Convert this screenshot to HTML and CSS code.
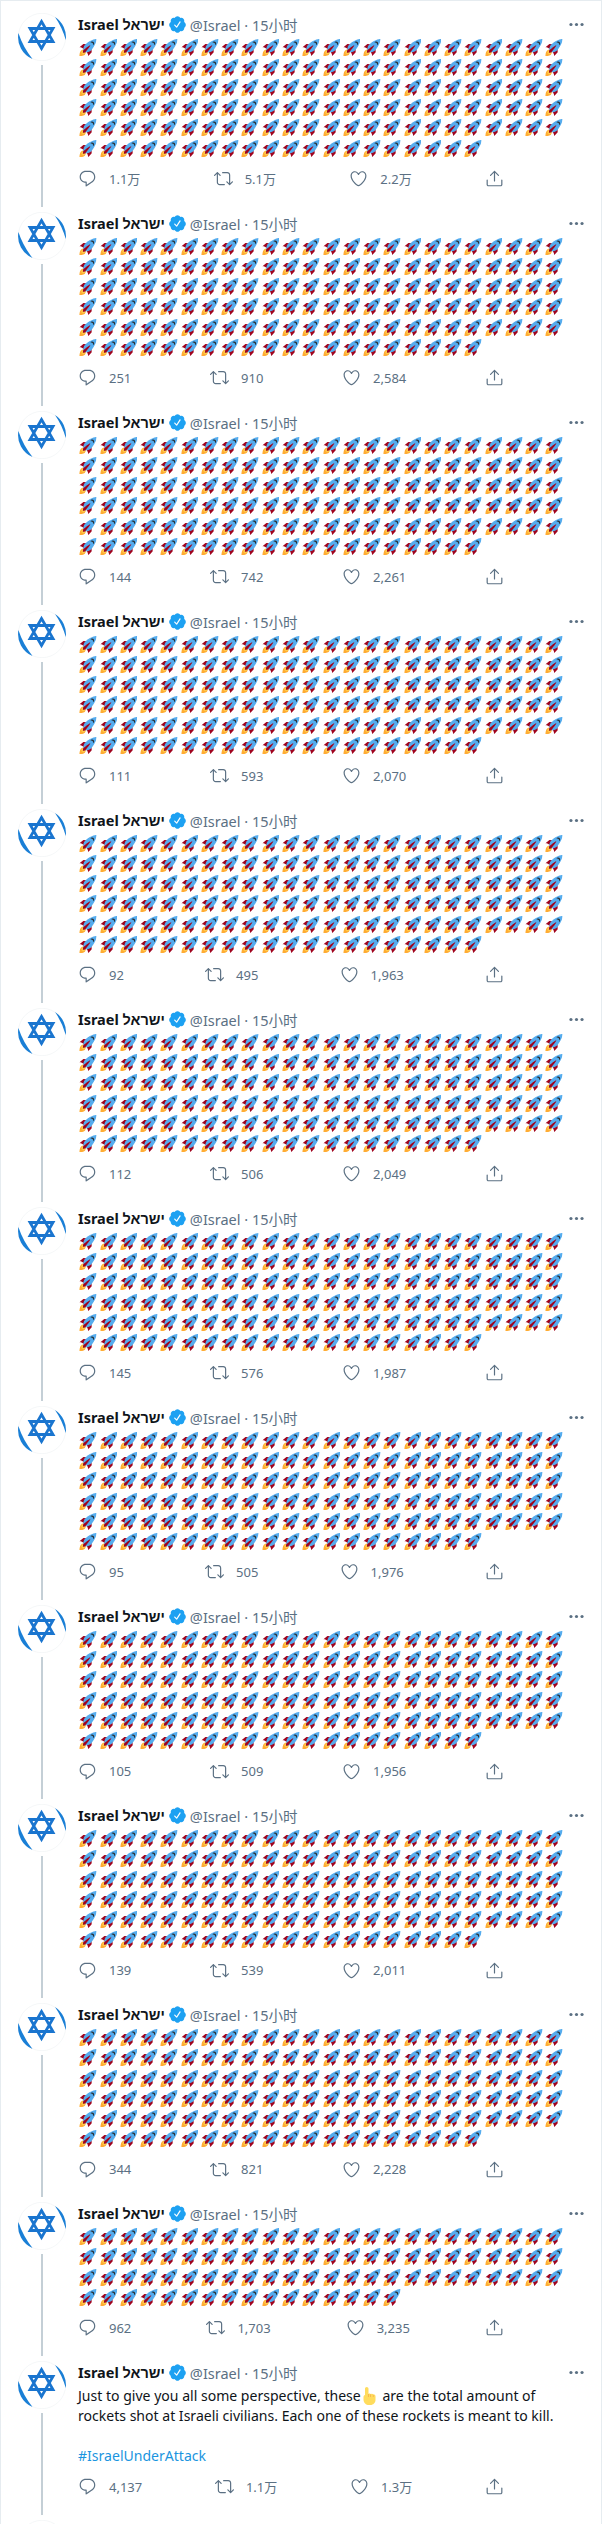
FILE: index.html
```
<!DOCTYPE html>
<html lang="zh">
  <head>
    <meta charset="UTF-8" />
    <meta name="viewport" content="width=device-width, initial-scale=1.0" />
    <title>Israel ישראל (@Israel)</title>
    <link rel="stylesheet" href="styles.css">
  </head>
  <body>
    <svg class="sprite" xmlns="http://www.w3.org/2000/svg">
      <symbol id="i-rocket" viewBox="0 0 36 36">
        <path fill="#A0041E" d="M1 17l8-7 16 1 1 16-7 8s.001-5.999-6-12-12-6-12-6z"/>
        <path fill="#FFAC33" d="M.973 35s-.036-7.979 2.985-11S15 21.187 15 21.187 14.999 29 11.999 32c-3 3-11.026 3-11.026 3z"/>
        <circle fill="#FFCC4D" cx="8.999" cy="27" r="4"/>
        <path fill="#55ACEE" d="M35.999 0s-10 0-22 10c-6 5-6 14-4 16s11 2 16-4c10-12 10-22 10-22z"/>
        <path fill="#292F33" d="M26.999 5c-1.623 0-3.013.971-3.641 2.36.502-.227 1.055-.36 1.641-.36 2.209 0 4 1.791 4 4 0 .586-.133 1.139-.359 1.64 1.388-.627 2.359-2.017 2.359-3.64 0-2.209-1.791-4-4-4z"/>
        <path fill="#A0041E" d="M8 28s0-4 1-5 13.001-10.999 14-10-9.001 13-10.001 14S8 28 8 28z"/>
      </symbol>
      <symbol id="i-hand" viewBox="0 0 36 36">
        <path fill="#FFDC5D" d="M8 3.5C8 1.6 9.6 0 11.5 0S15 1.6 15 3.5V14c1-1 3.600-1.300 5 .300 1.400-1 3.800-.700 4.800.900 1.500-.700 4.200.200 4.200 3.300V26c0 5.500-4.500 10-10 10h-3C10 36 5 32 5 25v-5c0-2 1.200-3.600 3-4.200V3.500z"/>
        <path fill="#EF9645" d="M15 14v6h-1v-6zM20 14.300V20h-1v-5zM24.800 15.200V20h-1v-4z"/>
      </symbol>
      <symbol id="i-badge" viewBox="0 0 24 24">
        <path fill="#1da1f2" d="M22.5 12.500c0-1.580-.875-2.950-2.148-3.600.154-.435.238-.905.238-1.400 0-2.210-1.710-3.998-3.818-3.998-.470 0-.920.084-1.336.250C14.818 2.415 13.510 1.500 12 1.500s-2.816.917-3.437 2.250c-.415-.165-.866-.250-1.336-.250-2.110 0-3.818 1.790-3.818 4 0 .494.083.964.237 1.400-1.272.650-2.147 2.018-2.147 3.600 0 1.495.782 2.798 1.942 3.486-.020.170-.032.340-.032.514 0 2.210 1.708 4 3.818 4 .470 0 .920-.086 1.335-.250.620 1.334 1.926 2.250 3.437 2.250 1.512 0 2.818-.916 3.437-2.250.415.163.865.248 1.336.248 2.110 0 3.818-1.790 3.818-4 0-.174-.012-.344-.033-.513 1.158-.687 1.943-1.990 1.943-3.484zm-6.616-3.334l-4.334 6.500c-.145.217-.382.334-.625.334-.143 0-.288-.040-.416-.126l-.115-.094-2.415-2.415c-.293-.293-.293-.768 0-1.060s.768-.294 1.060 0l1.770 1.767 3.825-5.740c.230-.345.696-.436 1.040-.207.346.230.440.696.210 1.040z"/>
      </symbol>
      <symbol id="i-more" viewBox="0 0 24 24">
        <circle cx="5" cy="12" r="2"/>
        <circle cx="12" cy="12" r="2"/>
        <circle cx="19" cy="12" r="2"/>
      </symbol>
      <symbol id="i-reply" viewBox="0 0 24 24">
        <path d="M14.046 2.242l-4.148-.010h-.002c-4.374 0-7.800 3.427-7.800 7.802 0 4.098 3.186 7.206 7.465 7.370v3.828c0 .108.044.286.120.403.142.225.384.347.632.347.138 0 .277-.038.402-.118.264-.168 6.473-4.140 8.088-5.506 1.902-1.610 3.040-3.970 3.043-6.312v-.017c-.006-4.367-3.430-7.787-7.800-7.788zm3.787 12.972c-1.134.960-4.862 3.405-6.772 4.643V16.670c0-.414-.335-.750-.750-.750h-.396c-3.660 0-6.318-2.476-6.318-5.886 0-3.534 2.768-6.302 6.300-6.302l4.147.010h.002c3.532 0 6.300 2.766 6.302 6.296-.003 1.910-.942 3.844-2.514 5.176z"/>
      </symbol>
      <symbol id="i-retweet" viewBox="0 0 24 24">
        <path d="M23.770 15.670c-.292-.293-.767-.293-1.060 0l-2.220 2.220V7.650c0-2.068-1.683-3.750-3.750-3.750h-5.850c-.414 0-.750.336-.750.750s.336.750.750.750h5.850c1.240 0 2.250 1.010 2.250 2.250v10.240l-2.220-2.220c-.293-.293-.768-.293-1.060 0s-.294.768 0 1.060l3.500 3.500c.145.147.337.220.530.220s.383-.072.530-.220l3.500-3.500c.294-.292.294-.767 0-1.060zm-10.660 3.280H7.260c-1.240 0-2.250-1.010-2.250-2.250V6.460l2.220 2.220c.148.147.340.220.532.220s.384-.073.530-.220c.293-.293.293-.768 0-1.060l-3.500-3.500c-.293-.294-.768-.294-1.060 0l-3.500 3.500c-.294.292-.294.767 0 1.060s.767.293 1.060 0l2.220-2.220V16.700c0 2.068 1.683 3.750 3.750 3.750h5.850c.414 0 .750-.336.750-.750s-.337-.750-.750-.750z"/>
      </symbol>
      <symbol id="i-like" viewBox="0 0 24 24">
        <path d="M12 21.638h-.014C9.403 21.590 1.950 14.856 1.950 8.478c0-3.064 2.525-5.754 5.403-5.754 2.290 0 3.830 1.580 4.646 2.730.814-1.148 2.354-2.730 4.645-2.730 2.880 0 5.404 2.690 5.404 5.755 0 6.376-7.454 13.110-10.037 13.157H12zM7.354 4.225c-2.080 0-3.903 1.988-3.903 4.255 0 5.740 7.034 11.596 8.550 11.658 1.518-.062 8.550-5.917 8.550-11.658 0-2.267-1.823-4.255-3.903-4.255-2.528 0-3.940 2.936-3.952 2.965-.230.562-1.156.562-1.387 0-.014-.030-1.425-2.965-3.954-2.965z"/>
      </symbol>
      <symbol id="i-share" viewBox="0 0 24 24">
        <path d="M17.530 7.470l-5-5c-.293-.293-.768-.293-1.060 0l-5 5c-.294.293-.294.768 0 1.060s.767.294 1.060 0l3.720-3.720V15c0 .414.336.750.750.750s.750-.336.750-.750V4.810l3.720 3.720c.146.147.338.220.530.220s.384-.072.530-.220c.293-.293.293-.767 0-1.060z"/>
        <path d="M19.708 21.944H4.292C3.028 21.944 2 20.916 2 19.652V14c0-.414.336-.750.750-.750s.750.336.750.750v5.652c0 .437.355.792.792.792h15.416c.437 0 .792-.355.792-.792V14c0-.414.336-.750.750-.750s.750.336.750.750v5.652c0 1.264-1.028 2.292-2.292 2.292z"/>
      </symbol>
      <symbol id="i-avatar" viewBox="0 0 48 48">
        <circle cx="24" cy="24" r="23.700" fill="#fff" stroke="#eef1f3" stroke-width="0.600"/>
        <path fill="#1a7fd6" d="M.4 20A24 24 0 0 0 14.500 46Q5 34 .4 20z"/>
        <path fill="#1a7fd6" d="M37 4A24 24 0 0 1 47.800 27Q44 14 37 4z"/>
        <path fill="none" stroke="#1a75cf" stroke-width="2.800" d="M23.500 8.500L35 28.500H12zM23.500 35.500L35 15.500H12z"/>
      </symbol>
    </svg>

    <div class="timeline" id="timeline"></div>

    <script src="script.js"></script>
  </body>
</html>
```

FILE: styles.css
```
html,
body {
  height: 2524px;
  overflow: hidden;
}
body {
  margin: 0;
  background-color: white;
  color: #0f1419;
  font-family: "Noto Sans", "Liberation Sans", "Noto Sans CJK SC", sans-serif;
  font-size: 14.5px;
}
.sprite {
  display: none;
}
.timeline {
  height: 2524px;
  padding-top: 7px;
  border: 1px solid #e6ecf0;
  border-bottom: none;
  box-sizing: border-box;
}
.tweet {
  display: flex;
  gap: 12px;
  padding: 0 15px 0 17px;
}
.side {
  display: flex;
  flex-direction: column;
  align-items: center;
  width: 48px;
  flex-shrink: 0;
  padding-top: 5px;
}
.avatar {
  display: block;
  width: 48px;
  height: 48px;
  flex-shrink: 0;
}
.thread {
  flex: 1;
  width: 2px;
  margin-top: 4px;
  background-color: #c4cfd6;
}
.main {
  flex: 1;
  min-width: 0;
  padding-top: 6px;
  padding-bottom: 18.65px;
}
.head {
  display: flex;
  align-items: center;
  height: 20px;
  white-space: nowrap;
}
.name {
  font-weight: bold;
}
.badge {
  width: 19px;
  height: 19px;
  margin: 0 3px;
}
.handle {
  color: #5b7083;
}
.more {
  width: 19px;
  height: 19px;
  margin-left: auto;
  fill: #5b7083;
}
.rockets {
  display: grid;
  grid-template-columns: repeat(24, 20.28px);
  grid-auto-rows: 20.07px;
  margin-top: 4px;
  place-items: center;
}
.rockets svg {
  width: 17.6px;
  height: 17.6px;
}
.text {
  margin: 4px 0 0;
  font-size: 14.05px;
  line-height: 20.07px;
}
.text a {
  color: #1b95e0;
  text-decoration: none;
}
.hand {
  width: 18px;
  height: 18px;
  vertical-align: -4px;
}
.actions {
  display: flex;
  justify-content: space-between;
  align-items: center;
  width: 426px;
  height: 19px;
  margin-top: 11px;
  color: #5b7083;
  font-size: 13px;
}
.action {
  display: flex;
  align-items: center;
  gap: 12px;
}
.action svg {
  width: 19px;
  height: 19px;
  fill: #5b7083;
}
```

FILE: script.js
```
const PER_ROW = 24;

const tweets = [
  { rockets: 140, counts: ["1.1万", "5.1万", "2.2万"] },
  { rockets: 140, counts: ["251", "910", "2,584"] },
  { rockets: 140, counts: ["144", "742", "2,261"] },
  { rockets: 140, counts: ["111", "593", "2,070"] },
  { rockets: 140, counts: ["92", "495", "1,963"] },
  { rockets: 140, counts: ["112", "506", "2,049"] },
  { rockets: 140, counts: ["145", "576", "1,987"] },
  { rockets: 140, counts: ["95", "505", "1,976"] },
  { rockets: 140, counts: ["105", "509", "1,956"] },
  { rockets: 140, counts: ["139", "539", "2,011"] },
  { rockets: 140, counts: ["344", "821", "2,228"] },
  { rockets: PER_ROW * 3 + 16, counts: ["962", "1,703", "3,235"] },
  {
    text: `Just to give you all some perspective, these<svg class="hand"><use href="#i-hand"/></svg> are the total amount of<br>rockets shot at Israeli civilians. Each one of these rockets is meant to kill.<br><br><a href="#">#IsraelUnderAttack</a>`,
    counts: ["4,137", "1.1万", "1.3万"],
  },
];

function icon(name, className = "") {
  return `<svg class="${className}"><use href="#i-${name}"/></svg>`;
}

function action(name, count) {
  return `<div class="action">${icon(name)}<span>${count}</span></div>`;
}

function tweetBody(tweet) {
  if (tweet.text) return `<p class="text">${tweet.text}</p>`;
  return `<div class="rockets" role="img" aria-label="🚀">${icon("rocket").repeat(tweet.rockets)}</div>`;
}

function renderTweet(tweet) {
  return `
    <article class="tweet">
      <div class="side">${icon("avatar", "avatar")}<div class="thread"></div></div>
      <div class="main">
        <div class="head">
          <span class="name">Israel ישראל</span>
          ${icon("badge", "badge")}
          <span class="handle">@Israel · 15小时</span>
          ${icon("more", "more")}
        </div>
        ${tweetBody(tweet)}
        <div class="actions">
          ${action("reply", tweet.counts[0])}
          ${action("retweet", tweet.counts[1])}
          ${action("like", tweet.counts[2])}
          <div class="action">${icon("share")}</div>
        </div>
      </div>
    </article>`;
}

// the next tweet is cut off by the bottom of the page, only its avatar shows
const nextTweet = `<article class="tweet"><div class="side">${icon("avatar", "avatar")}</div></article>`;

document.getElementById("timeline").innerHTML =
  tweets.map(renderTweet).join("") + nextTweet;
```
